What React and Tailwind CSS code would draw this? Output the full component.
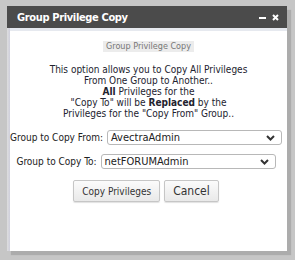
import React from 'react';

const font = { fontFamily: '"DejaVu Sans Condensed", "DejaVu Sans", sans-serif' };

function Chevron() {
  return (
    <svg width="9" height="6" viewBox="0 0 9 6" className="shrink-0">
      <path d="M1 1 L4.5 4.5 L8 1" fill="none" stroke="#333" strokeWidth="2" />
    </svg>
  );
}

function FakeSelect({ value, width }) {
  return (
    <div className={`flex items-center justify-between h-[15px] border border-[#b8b8b8] rounded-[3px] bg-white pl-[3px] pr-[6px] shrink-0 ${width}`}>
      <span className="text-[11px] leading-none text-[#222]">{value}</span>
      <Chevron />
    </div>
  );
}

function Row({ label, value, width }) {
  return (
    <div className="flex items-center justify-center gap-[4px]">
      <span className="text-[10px] leading-none text-[#222] whitespace-nowrap">{label}</span>
      <FakeSelect value={value} width={width} />
    </div>
  );
}

export default function App() {
  return (
    <div className="w-[295px] h-[260px] bg-[#c6c6c6] pt-[6px] pl-[7px] overflow-hidden" style={font}>
      <div className="w-[280px] h-[245px] flex flex-col bg-white shadow-[4px_4px_1px_rgba(0,0,0,0.13)]">
        {/* title bar */}
        <div className="h-[22px] bg-[#4b4b4b] flex items-center justify-between pl-[10px] pr-[8px]">
          <span className="text-white font-bold text-[11px] leading-none tracking-[-0.35px]">Group Privilege Copy</span>
          <div className="flex items-center gap-[6px] text-white font-bold">
            <span className="block w-[7px] h-[2px] bg-white mt-[1px]" />
            <svg width="7" height="7" viewBox="0 0 7 7">
              <path d="M1 1 L6 6 M6 1 L1 6" stroke="#fff" strokeWidth="2" />
            </svg>
          </div>
        </div>

        <div className="flex flex-1">
          <div className="w-[5px] bg-gradient-to-r from-[#dedede] to-[#cfcfdc]" />
          <div className="flex-1 flex flex-col">
            <div className="h-[3px] bg-[#e6e9ef]" />
            <div className="flex flex-col items-center pt-[10px]">
              <span className="bg-[#ececec] text-[#777] text-[9px] leading-[11px] px-[3px]">Group Privilege Copy</span>
              <p className="mt-[12px] text-center text-[10px] leading-[11px] text-[#22222e]">
                This option allows you to Copy All Privileges<br />
                From One Group to Another..<br />
                <b>All</b> Privileges for the<br />
                "Copy To" will be <b>Replaced</b> by the<br />
                Privileges for the "Copy From" Group..
              </p>
            </div>
            <div className="flex flex-col mt-[11px] gap-[9px] pr-[5px]">
              <Row label="Group to Copy From:" value="AvectraAdmin" width="w-[175px]" />
              <Row label="Group to Copy To:" value="netFORUMAdmin" width="w-[175px]" />
            </div>
            <div className="flex justify-center gap-[4px] mt-[11px] pr-[5px]">
              <button className="h-[22px] px-[8px] border border-[#c6c6c6] rounded-[2px] bg-gradient-to-b from-[#fbfbfb] to-[#e9e9e9] shadow-[0_1px_1px_rgba(0,0,0,0.12)] text-[10px] text-[#333]">
                Copy Privileges
              </button>
              <button className="h-[22px] px-[8px] border border-[#c6c6c6] rounded-[2px] bg-gradient-to-b from-[#fbfbfb] to-[#e9e9e9] shadow-[0_1px_1px_rgba(0,0,0,0.12)] text-[12px] text-[#333]">
                Cancel
              </button>
            </div>
          </div>
        </div>
      </div>
    </div>
  );
}
